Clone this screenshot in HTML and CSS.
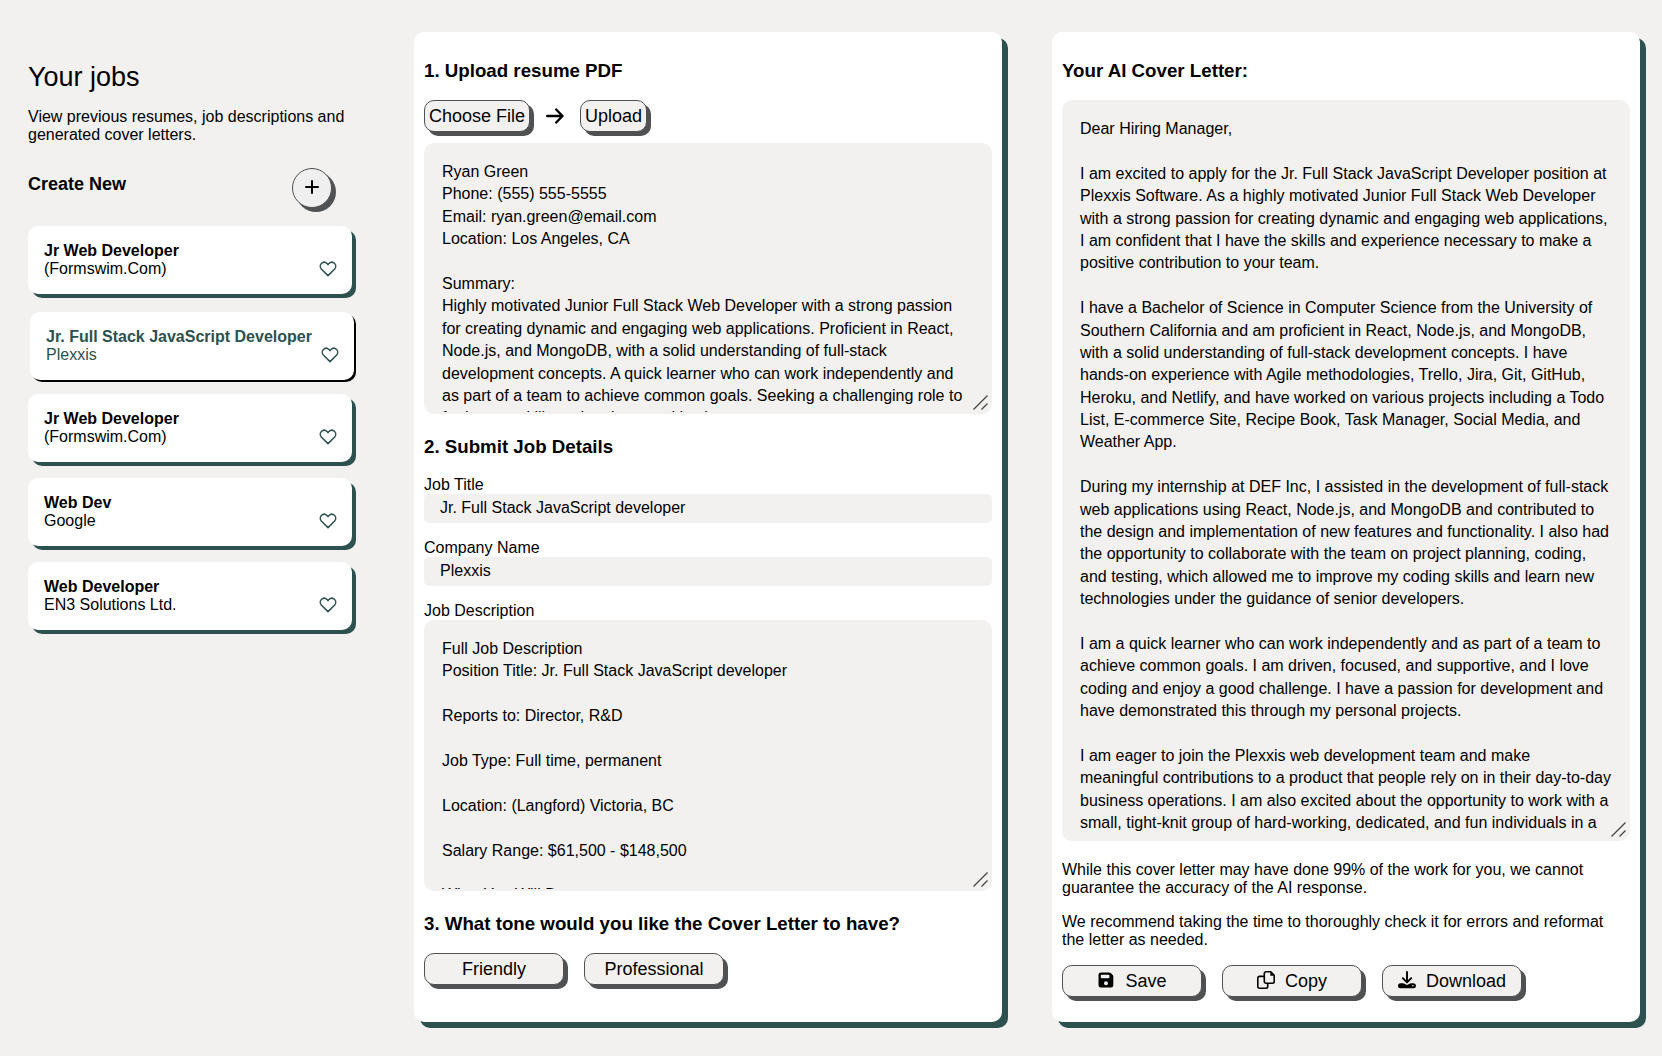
FILE: index.html
```html
<!DOCTYPE html>
<html lang="en">
<head>
<meta charset="utf-8">
<meta name="viewport" content="width=device-width, initial-scale=1">
<title>AI Cover Letter</title>
<link rel="stylesheet" href="styles.css">
</head>
<body>
<svg class="sprite" aria-hidden="true">
  <symbol id="heart" viewBox="0 0 18 18"><path d="M9 15.600 2.500 9.200C.9 7.500.9 5 2.400 3.500 4.100 1.900 6.500 2 8 3.500L9 4.600l1-1.100c1.500-1.500 3.900-1.600 5.600 0 1.500 1.500 1.500 4-.1 5.700z" fill="none" stroke="currentColor" stroke-width="1.500" stroke-linejoin="round"/></symbol>
  <symbol id="grip" viewBox="0 0 15 15"><path d="M.5 14.500 14.500.5M8.500 14.500l6-6" fill="none" stroke="currentColor" stroke-width="1.300"/></symbol>
</svg>
<main class="page">
  <aside class="sidebar">
    <h1 class="sidebar-title">Your jobs</h1>
    <p class="sidebar-text">View previous resumes, job descriptions and generated cover letters.</p>
    <div class="create-row">
      <h2 class="create-title" id="create">Create New</h2>
      <button class="round-button" type="button" aria-labelledby="create">
        <svg width="14" height="14" viewBox="0 0 14 14" aria-hidden="true"><path d="M7 1v12M1 7h12" stroke="currentColor" stroke-width="2" stroke-linecap="round"/></svg>
      </button>
    </div>
    <ul class="job-list">
      <li class="job">
        <a class="job-link" href="#"><strong>Jr Web Developer</strong><span>(Formswim.Com)</span></a>
        <button class="heart" type="button" aria-label="Favourite"><svg width="18" height="18"><use href="#heart"/></svg></button>
      </li>
      <li class="job job-active">
        <a class="job-link" href="#" aria-current="true"><strong>Jr. Full Stack JavaScript Developer</strong><span>Plexxis</span></a>
        <button class="heart" type="button" aria-label="Favourite"><svg width="18" height="18"><use href="#heart"/></svg></button>
      </li>
      <li class="job">
        <a class="job-link" href="#"><strong>Jr Web Developer</strong><span>(Formswim.Com)</span></a>
        <button class="heart" type="button" aria-label="Favourite"><svg width="18" height="18"><use href="#heart"/></svg></button>
      </li>
      <li class="job">
        <a class="job-link" href="#"><strong>Web Dev</strong><span>Google</span></a>
        <button class="heart" type="button" aria-label="Favourite"><svg width="18" height="18"><use href="#heart"/></svg></button>
      </li>
      <li class="job">
        <a class="job-link" href="#"><strong>Web Developer</strong><span>EN3 Solutions Ltd.</span></a>
        <button class="heart" type="button" aria-label="Favourite"><svg width="18" height="18"><use href="#heart"/></svg></button>
      </li>
    </ul>
  </aside>

  <form class="panel">
    <h3 class="heading" id="resume-heading">1. Upload resume PDF</h3>
    <div class="upload-row">
      <button class="button" type="button">Choose File</button>
      <svg width="18" height="16" viewBox="0 0 18 16" aria-hidden="true"><path d="M1.200 8h15M10.200 1.500 16.500 8l-6.300 6.500" fill="none" stroke="currentColor" stroke-width="2.400" stroke-linecap="round" stroke-linejoin="round"/></svg>
      <button class="button" type="button">Upload</button>
    </div>
    <div class="area">
      <textarea class="textarea" aria-labelledby="resume-heading">Ryan Green
Phone: (555) 555-5555
Email: ryan.green@email.com
Location: Los Angeles, CA

Summary:
Highly motivated Junior Full Stack Web Developer with a strong passion for creating dynamic and engaging web applications. Proficient in React, Node.js, and MongoDB, with a solid understanding of full-stack development concepts. A quick learner who can work independently and as part of a team to achieve common goals. Seeking a challenging role to further my skills and make a positive impact.</textarea>
      <svg class="grip" width="15" height="15" aria-hidden="true"><use href="#grip"/></svg>
    </div>

    <h3 class="heading">2. Submit Job Details</h3>
    <div class="fields">
      <div class="field">
        <label for="title">Job Title</label>
        <input class="input" id="title" type="text" value="Jr. Full Stack JavaScript developer">
      </div>
      <div class="field">
        <label for="company">Company Name</label>
        <input class="input" id="company" type="text" value="Plexxis">
      </div>
      <div class="field">
        <label for="description">Job Description</label>
        <div class="area">
          <textarea class="textarea" id="description">Full Job Description
Position Title: Jr. Full Stack JavaScript developer

Reports to: Director, R&amp;D

Job Type: Full time, permanent

Location: (Langford) Victoria, BC

Salary Range: $61,500 - $148,500

What You Will Do:</textarea>
          <svg class="grip" width="15" height="15" aria-hidden="true"><use href="#grip"/></svg>
        </div>
      </div>
    </div>

    <h3 class="heading">3. What tone would you like the Cover Letter to have?</h3>
    <div class="button-row">
      <button class="button button-wide" type="button">Friendly</button>
      <button class="button button-wide" type="button">Professional</button>
    </div>
  </form>

  <section class="panel panel-letter">
    <h3 class="heading" id="letter-heading">Your AI Cover Letter:</h3>
    <div class="area area-grow">
      <textarea class="textarea" aria-labelledby="letter-heading">Dear Hiring Manager,

I am excited to apply for the Jr. Full Stack JavaScript Developer position at Plexxis Software. As a highly motivated Junior Full Stack Web Developer with a strong passion for creating dynamic and engaging web applications, I am confident that I have the skills and experience necessary to make a positive contribution to your team.

I have a Bachelor of Science in Computer Science from the University of Southern California and am proficient in React, Node.js, and MongoDB, with a solid understanding of full-stack development concepts. I have hands-on experience with Agile methodologies, Trello, Jira, Git, GitHub, Heroku, and Netlify, and have worked on various projects including a Todo List, E-commerce Site, Recipe Book, Task Manager, Social Media, and Weather App.

During my internship at DEF Inc, I assisted in the development of full-stack web applications using React, Node.js, and MongoDB and contributed to the design and implementation of new features and functionality. I also had the opportunity to collaborate with the team on project planning, coding, and testing, which allowed me to improve my coding skills and learn new technologies under the guidance of senior developers.

I am a quick learner who can work independently and as part of a team to achieve common goals. I am driven, focused, and supportive, and I love coding and enjoy a good challenge. I have a passion for development and have demonstrated this through my personal projects.

I am eager to join the Plexxis web development team and make meaningful contributions to a product that people rely on in their day-to-day business operations. I am also excited about the opportunity to work with a small, tight-knit group of hard-working, dedicated, and fun individuals in a</textarea>
      <svg class="grip" width="15" height="15" aria-hidden="true"><use href="#grip"/></svg>
    </div>
    <div class="notes">
      <p>While this cover letter may have done 99% of the work for you, we cannot guarantee the accuracy of the AI response.</p>
      <p>We recommend taking the time to thoroughly check it for errors and reformat the letter as needed.</p>
    </div>
    <div class="button-row">
      <button class="button button-wide" type="button">
        <svg class="button-icon" width="18" height="18" viewBox="0 0 18 18" aria-hidden="true"><path fill="currentColor" fill-rule="evenodd" d="M4 1.500h8.200c.6 0 1.100.2 1.500.6l2 2c.4.400.6.900.6 1.500V14a2.500 2.500 0 0 1-2.500 2.500H4A2.500 2.500 0 0 1 1.500 14V4A2.500 2.500 0 0 1 4 1.500zm.6 2.200c-.5 0-.8.3-.8.8v2c0 .5.300.8.8.8h7c.5 0 .8-.3.8-.8v-2c0-.5-.3-.8-.8-.8zM9 10.200a2 2 0 1 0 0 4 2 2 0 0 0 0-4z"/></svg>
        Save
      </button>
      <button class="button button-wide" type="button">
        <svg class="button-icon" width="18" height="18" viewBox="0 0 18 18" aria-hidden="true"><g fill="none" stroke="currentColor" stroke-width="1.600" stroke-linejoin="round"><path d="M9 .8h4.800l3.400 3.400v6.300a1.700 1.700 0 0 1-1.700 1.700H9a1.700 1.700 0 0 1-1.700-1.700v-8A1.700 1.700 0 0 1 9 .8z"/><path d="M7.300 5.400H2.500A1.700 1.700 0 0 0 .8 7.100v8.400a1.700 1.700 0 0 0 1.700 1.700H9a1.700 1.700 0 0 0 1.700-1.700v-3.300"/></g><path d="M13.300.8v3.900h3.900z" fill="currentColor"/></svg>
        Copy
      </button>
      <button class="button button-wide" type="button">
        <svg class="button-icon" width="18" height="18" viewBox="0 0 18 18" aria-hidden="true"><path d="M9 1v10M4.800 7.200 9 11.400l4.200-4.200" fill="none" stroke="currentColor" stroke-width="1.900" stroke-linecap="round" stroke-linejoin="round"/><path fill="currentColor" fill-rule="evenodd" d="M2.500 12.300h2.800L9 14l3.700-1.700h2.800a2.500 2.500 0 0 1 0 5h-13a2.500 2.500 0 0 1 0-5zm12.400 1.700a.8.800 0 1 0 0 1.600.8.800 0 0 0 0-1.600z"/></svg>
        Download
      </button>
    </div>
  </section>
</main>
</body>
</html>
```
FILE: styles.css
```css
:root {
  --paper: #f2f1ef;
  --green: #2c514f;
  --edge: #505152;
}

* {
  box-sizing: border-box;
}

body {
  margin: 0;
  background: var(--paper);
  color: #000;
  font: 16px/18px "Liberation Sans", Helvetica, Arial, sans-serif;
}

h1,
h2,
h3,
p,
ul {
  margin: 0;
  padding: 0;
}

button,
input,
textarea {
  font: inherit;
  color: inherit;
}

svg {
  display: block;
  flex: none;
}

.sprite {
  display: none;
}

.page {
  display: grid;
  grid-template-columns: 336px minmax(0, 1fr) minmax(0, 1fr);
  gap: 50px;
  min-height: 100vh;
  padding: 32px 22px 34px 28px;
}

/* Saved jobs */

.sidebar {
  padding: 30px 12px 0 0;
}

.sidebar-title {
  font-size: 27px;
  line-height: 30px;
  font-weight: 400;
}

.sidebar-text {
  margin-top: 16px;
}

.create-row {
  display: flex;
  justify-content: space-between;
  align-items: flex-start;
  margin: 24px 20px 18px 0;
}

.create-title {
  font-size: 18px;
  line-height: 32px;
}

.round-button {
  display: grid;
  place-content: center;
  width: 40px;
  height: 40px;
  padding: 0 0 2px;
  border: 1px solid var(--edge);
  border-radius: 50%;
  background: #efefef;
  box-shadow: 4px 4px 0 var(--edge);
}

.job-list {
  display: grid;
  gap: 16px;
  list-style: none;
}

.job {
  display: flex;
  justify-content: space-between;
  align-items: flex-end;
  padding: 16px 15px 16px 16px;
  border-radius: 10px;
  background: #fff;
  box-shadow: 4px 4px 0 var(--green);
}

.job-active {
  color: var(--green);
  box-shadow: 2px 2px 0 #000;
  transform: translate(2px, 2px);
}

.job-link {
  display: grid;
  color: inherit;
  text-decoration: none;
}

.heart {
  padding: 0;
  border: 0;
  background: none;
  color: var(--green);
}

/* Panels */

.panel {
  display: flex;
  flex-direction: column;
  padding: 6px 10px 37px;
  border-radius: 10px;
  background: #fff;
  box-shadow: 6px 6px 0 var(--green);
}

.panel-letter {
  padding-bottom: 25px;
}

.heading {
  margin: 22px 0 18px;
  line-height: 22px;
}

.upload-row {
  display: flex;
  align-items: center;
  gap: 16px;
  margin-bottom: 11px;
}

.button-row {
  display: flex;
  gap: 20px;
}

.button {
  display: flex;
  justify-content: center;
  align-items: center;
  gap: 10px;
  height: 32px;
  padding: 0 4px;
  border: 1px solid var(--edge);
  border-radius: 10px;
  background: var(--paper);
  box-shadow: 4px 4px 0 var(--edge);
  font-size: 18px;
  line-height: 22px;
}

.button-wide {
  width: 140px;
}

.button-icon {
  margin-bottom: 3px;
}

.fields {
  display: grid;
  gap: 16px;
}

.field {
  display: grid;
}

.input {
  width: 100%;
  height: 29px;
  padding: 0 16px 2px;
  border: 0;
  border-radius: 5px;
  background: var(--paper);
}

.area {
  display: flex;
  position: relative;
}

.area-grow {
  flex: 1;
}

.textarea {
  width: 100%;
  height: 271px;
  padding: 16px;
  border: 2px solid var(--paper);
  border-radius: 10px;
  background: var(--paper);
  line-height: 1.4;
  resize: none;
  scrollbar-width: none;
}

.area-grow .textarea {
  height: auto;
}

.grip {
  position: absolute;
  right: 4px;
  bottom: 4px;
  color: #444;
}

.notes {
  display: grid;
  gap: 16px;
  margin: 20px 0 16px;
  padding-right: 16px;
}
```
